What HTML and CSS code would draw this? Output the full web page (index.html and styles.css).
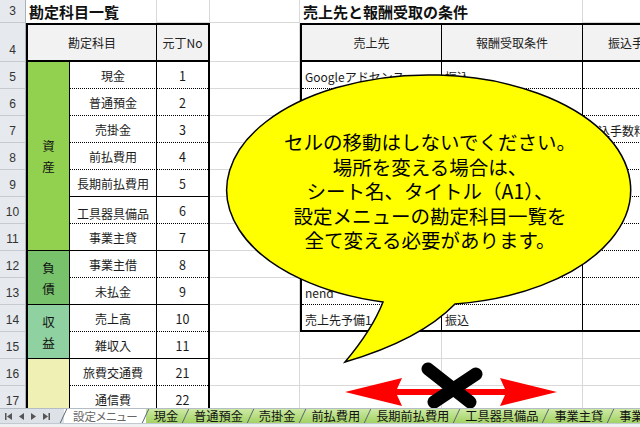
FILE: index.html
```html
<!DOCTYPE html>
<html lang="ja">
<head>
<meta charset="utf-8">
<title>設定メニュー</title>
<link rel="stylesheet" href="styles.css">
</head>
<body>
<div class="app">
  <div class="sheet">
    <div class="grid">
      <div class="rh">3</div>
      <div class="c span2 title">勘定科目一覧</div>
      <div class="c"></div>
      <div class="c"></div>
      <div class="c span2 title">売上先と報酬受取の条件</div>
      <div class="c"></div>

      <div class="rh">4</div>
      <div class="ltable">
        <div class="lh lh1">勘定科目</div>
        <div class="lh">元丁No</div>

        <div class="grp g-asset"><span>資</span><span>産</span></div>
        <div class="it">現金</div><div class="num">1</div>
        <div class="it">普通預金</div><div class="num">2</div>
        <div class="it">売掛金</div><div class="num">3</div>
        <div class="it">前払費用</div><div class="num">4</div>
        <div class="it sb">長期前払費用</div><div class="num sb">5</div>
        <div class="it low">工具器具備品</div><div class="num">6</div>
        <div class="it sb">事業主貸</div><div class="num sb">7</div>

        <div class="grp g-liab"><span>負</span><span>債</span></div>
        <div class="it">事業主借</div><div class="num">8</div>
        <div class="it sb">未払金</div><div class="num sb">9</div>

        <div class="grp g-rev"><span>収</span><span>益</span></div>
        <div class="it">売上高</div><div class="num">10</div>
        <div class="it sb">雑収入</div><div class="num sb">11</div>

        <div class="grp g-exp"></div>
        <div class="it">旅費交通費</div><div class="num">21</div>
        <div class="it">通信費</div><div class="num">22</div>
      </div>
      <div class="c"></div>
      <div class="rtable">
        <div class="rhd rv">売上先</div>
        <div class="rhd rv">報酬受取条件</div>
        <div class="rhd">振込手数料</div>

        <div class="rc rv">Googleアドセンス</div><div class="rc rv">振込</div><div class="rc"></div>
        <div class="rc rv"></div><div class="rc rv"></div><div class="rc"></div>
        <div class="rc rv"></div><div class="rc rv"></div><div class="rc">振込手数料</div>
        <div class="rc rv"></div><div class="rc rv"></div><div class="rc"></div>
        <div class="rc rv"></div><div class="rc rv"></div><div class="rc"></div>
        <div class="rc rv"></div><div class="rc rv"></div><div class="rc"></div>
        <div class="rc rv"></div><div class="rc rv"></div><div class="rc"></div>
        <div class="rc rv"></div><div class="rc rv"></div><div class="rc"></div>
        <div class="rc rv">nend</div><div class="rc rv"></div><div class="rc"></div>
        <div class="rc rv last">売上先予備1</div><div class="rc rv last">振込</div><div class="rc last"></div>
      </div>

      <div class="rh">5</div><div class="c"></div>
      <div class="rh">6</div><div class="c"></div>
      <div class="rh">7</div><div class="c"></div>
      <div class="rh">8</div><div class="c"></div>
      <div class="rh">9</div><div class="c"></div>
      <div class="rh">10</div><div class="c"></div>
      <div class="rh">11</div><div class="c"></div>
      <div class="rh">12</div><div class="c"></div>
      <div class="rh">13</div><div class="c"></div>
      <div class="rh">14</div><div class="c"></div>
      <div class="rh">15</div><div class="c"></div><div class="c"></div><div class="c"></div><div class="c"></div>
      <div class="rh">16</div><div class="c"></div><div class="c"></div><div class="c"></div><div class="c"></div>
      <div class="rh">17</div><div class="c"></div><div class="c"></div><div class="c"></div><div class="c"></div>
    </div>

    <svg class="overlay" width="640" height="408" viewBox="0 0 640 408">
      <path d="M 383 302 Q 372 330 345 362 Q 420 340 455 304 A 202 115 0 1 0 383 302 Z" fill="#ffff00" stroke="#000" stroke-width="1.5"/>
      <polygon fill="#ff0000" points="345,392 402,378 397,389 505,389 500,378 557,392 500,406 505,395 397,395 402,406"/>
      <g stroke="#000" stroke-width="13" stroke-linecap="round">
        <line x1="428" y1="369" x2="470" y2="402"/>
        <line x1="476" y1="374" x2="434" y2="402"/>
      </g>
    </svg>
    <div class="callout-text">
      <div>セルの移動はしないでください。</div>
      <div>場所を変える場合は、</div>
      <div>シート名、タイトル（A1）、</div>
      <div>設定メニューの勘定科目一覧を</div>
      <div>全て変える必要があります。</div>
    </div>
  </div>

  <div class="tabbar">
    <div class="nav">
      <svg width="7" height="7" viewBox="0 0 7 7"><rect x="0" y="0" width="1.5" height="7" fill="#555"/><polygon points="2,3.5 7,0 7,7" fill="#555"/></svg>
      <svg width="5" height="7" viewBox="0 0 5 7"><polygon points="0,3.5 5,0 5,7" fill="#555"/></svg>
      <svg width="5" height="7" viewBox="0 0 5 7"><polygon points="5,3.5 0,0 0,7" fill="#555"/></svg>
      <svg width="7" height="7" viewBox="0 0 7 7"><polygon points="5,3.5 0,0 0,7" fill="#555"/><rect x="5.5" y="0" width="1.5" height="7" fill="#555"/></svg>
    </div>
    <div class="tabs">
      <div class="tab active">設定メニュー</div>
      <div class="tab">現金</div>
      <div class="tab">普通預金</div>
      <div class="tab">売掛金</div>
      <div class="tab">前払費用</div>
      <div class="tab">長期前払費用</div>
      <div class="tab">工具器具備品</div>
      <div class="tab">事業主貸</div>
      <div class="tab">事業主借</div>
    </div>
  </div>
  <div class="status"></div>
</div>
</body>
</html>
```

FILE: styles.css
```css
* { box-sizing: border-box; }
html, body { margin: 0; padding: 0; }
body {
  width: 640px;
  height: 427px;
  overflow: hidden;
  background: #fff;
  font-family: "Noto Sans CJK JP", "Noto Sans", sans-serif;
  color: #1a1a1a;
}
.app {
  width: 640px;
  height: 427px;
  display: flex;
  flex-direction: column;
  overflow: hidden;
}
.sheet {
  position: relative;
  height: 408px;
  flex: 0 0 408px;
  overflow: hidden;
}
.grid {
  display: grid;
  grid-template-columns: 26px 44px 87px 53px 90px 142px 141px 110px;
  grid-template-rows: 23px 39px repeat(13, 27px);
  width: 693px;
}
.rh {
  background: #e6e9ed;
  border-right: 1px solid #a9b0b8;
  border-bottom: 1px solid #c6cbd1;
  color: #333;
  font-family: "Liberation Sans", Arial, sans-serif;
  font-size: 12px;
  line-height: 13px;
  display: flex;
  justify-content: center;
  align-items: flex-end;
  padding-bottom: 4px;
}
.c {
  border-right: 1px solid #d9d9d9;
  border-bottom: 1px solid #d9d9d9;
}
.span2 { grid-column: span 2; }
.title {
  font-weight: 700;
  font-size: 15px;
  line-height: 18px;
  display: flex;
  align-items: center;
  padding-left: 3px;
  white-space: nowrap;
  color: #111;
  border-bottom: none;
}

/* left table */
.ltable {
  grid-column: span 3;
  grid-row: span 14;
  display: grid;
  grid-template-columns: 42px 87px 51px;
  grid-template-rows: 37px repeat(13, 27px);
  border: 2px solid #000;
  border-bottom: none;
  font-size: 12px;
}
.lh {
  background: #f2f2f2;
  border-bottom: 2px solid #000;
  display: flex;
  align-items: center;
  justify-content: center;
  color: #222;
}
.lh1 { grid-column: span 2; border-right: 1px solid #000; }
.grp {
  border-right: 1px solid #000;
  border-bottom: 1px solid #000;
  display: flex;
  flex-direction: column;
  align-items: center;
  justify-content: center;
  line-height: 21px;
  font-size: 12.5px;
  color: #111;
}
.g-asset { grid-row: span 7; background: #92d050; }
.g-liab { grid-row: span 2; background: #78c26c; }
.g-rev { grid-row: span 2; background: #8fd1a0; }
.g-exp { grid-row: span 2; background: #eff0b4; }
.it, .num {
  border-bottom: 1px dotted #000;
  display: flex;
  align-items: center;
  justify-content: center;
  white-space: nowrap;
  color: #1a1a1a;
}
.it { border-right: 1px solid #000; }
.num { font-size: 12.5px; }
.sb { border-bottom-style: solid; }
.low { padding-top: 6px; }

/* right table */
.rtable {
  grid-column: span 3;
  grid-row: span 11;
  display: grid;
  grid-template-columns: 140px 141px 110px;
  grid-template-rows: 37px repeat(9, 27px) 25px;
  border-top: 2px solid #000;
  border-left: 2px solid #000;
  border-bottom: 2px solid #000;
  font-size: 12px;
}
.rhd {
  background: #f2f2f2;
  border-bottom: 2px solid #000;
  display: flex;
  align-items: center;
  justify-content: center;
  white-space: nowrap;
  color: #222;
}
.rv { border-right: 1px solid #000; }
.rc {
  border-bottom: 1px dotted #000;
  display: flex;
  align-items: flex-end;
  padding: 0 3px 3px;
  white-space: nowrap;
  color: #1a1a1a;
}
.rc.last { border-bottom: none; padding-bottom: 2px; }

/* overlay */
.overlay {
  position: absolute;
  left: 0;
  top: 0;
}
.callout-text {
  position: absolute;
  left: 230px;
  top: 130px;
  width: 400px;
  text-align: center;
  font-size: 19.5px;
  line-height: 24.5px;
  color: #000;
  white-space: nowrap;
}

/* tabs */
.tabbar {
  flex: 0 0 15px;
  height: 15px;
  display: flex;
  background: #dde2e8;
  border-top: 1px solid #b4bcc6;
  overflow: hidden;
}
.nav {
  flex: 0 0 64px;
  display: flex;
  align-items: center;
  gap: 7px;
  padding-left: 5px;
}
.tabs {
  display: flex;
  white-space: nowrap;
}
.tab {
  position: relative;
  padding: 0 8px;
  font-size: 12.2px;
  line-height: 14px;
  display: flex;
  align-items: center;
  background: linear-gradient(#cdeaa4, #a2d264);
  color: #111;
}
.tab::before {
  content: "";
  position: absolute;
  left: -1px;
  top: 0;
  bottom: 0;
  border-left: 1px solid #5d6670;
  transform: skewX(-25deg);
}
.tab.active {
  background: #fff;
  color: #666;
  font-size: 11.5px;
  padding: 0 8px 0 9px;
  font-feature-settings: "palt";
}
.status {
  flex: 1 1 auto;
  background: #eef0f2;
  border-top: 1px solid #c3c9d0;
}
```
